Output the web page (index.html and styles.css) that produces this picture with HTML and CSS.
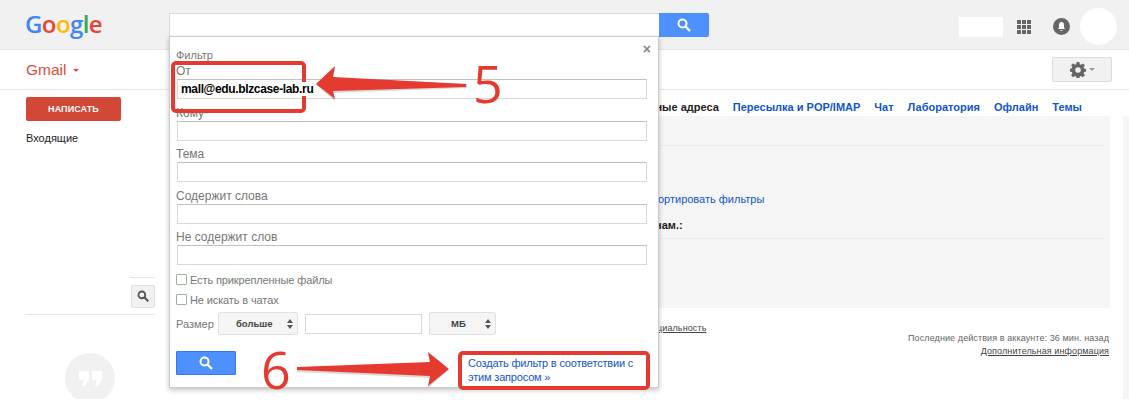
FILE: index.html
```html
<!DOCTYPE html>
<html lang="ru">
<head>
    <meta charset="UTF-8">
    <title>Gmail - Фильтры</title>
    <link rel="stylesheet" href="styles.css">
</head>
<body>
    <!-- верхняя полоса -->
    <header class="topbar">
        <div class="logo"><span class="c-blue">G</span><span class="c-red">o</span><span class="c-yellow">o</span><span class="c-blue">g</span><span class="c-green">l</span><span class="c-red">e</span></div>
        <div class="searchbox"></div>
        <button class="search-btn">
            <svg width="16" height="16" viewBox="0 0 16 16"><circle cx="6.5" cy="6.5" r="4" fill="none" stroke="#fff" stroke-width="2"/><path d="M9.6 9.6 14 14" stroke="#fff" stroke-width="2.4"/></svg>
        </button>
        <div class="account">
            <div class="account-name"></div>
            <svg class="apps" width="14" height="14" viewBox="0 0 14 14" fill="#666"><rect width="4" height="4"/><rect x="5" width="4" height="4"/><rect x="10" width="4" height="4"/><rect y="5" width="4" height="4"/><rect x="5" y="5" width="4" height="4"/><rect x="10" y="5" width="4" height="4"/><rect y="10" width="4" height="4"/><rect x="5" y="10" width="4" height="4"/><rect x="10" y="10" width="4" height="4"/></svg>
            <svg class="bell" width="17" height="17" viewBox="0 0 17 17"><circle cx="8.5" cy="8.5" r="8.5" fill="#666"/><path d="M8.5 4C6.7 4 6 5.400 6 7v2.500L5 11h7l-1-1.500V7c0-1.600-.7-3-2.500-3zM7.400 12a1.100 1.100 0 0 0 2.200 0z" fill="#fff"/></svg>
            <div class="avatar"></div>
        </div>
    </header>

    <!-- вторая полоса -->
    <div class="subbar">
        <div class="gmail">Gmail <span class="caret"></span></div>
        <button class="gear-btn">
            <svg width="16" height="16" viewBox="0 0 16 16"><path fill="#666" fill-rule="evenodd" d="M6.600 0h2.800l.4 2.200 1.200.5L12.900 1.400l2 2-1.300 1.900.5 1.200 2 .4v2.800l-2 .4-.5 1.200 1.300 1.900-2 2-1.900-1.300-1.200.5-.4 2H6.600l-.4-2-1.200-.5-1.900 1.300-2-2 1.300-1.900-.5-1.200-2-.4V6.700l2-.4.5-1.200-1.300-1.900 2-2L5 2.700l1.200-.5zM8 5.200a2.800 2.800 0 1 0 0 5.600 2.800 2.800 0 0 0 0-5.600z"/></svg>
            <span class="caret caret-grey"></span>
        </button>
    </div>

    <div class="layout">
        <!-- левая колонка -->
        <aside class="sidebar">
            <button class="compose">НАПИСАТЬ</button>
            <div class="inbox">Входящие</div>
            <div class="side-line"></div>
            <div class="side-search">
                <button class="small-search">
                    <svg width="12" height="12" viewBox="0 0 16 16"><circle cx="6.500" cy="6.500" r="4.500" fill="none" stroke="#555" stroke-width="2.400"/><path d="M10 10l5 5" stroke="#555" stroke-width="2.800"/></svg>
                </button>
            </div>
            <div class="hangouts">
                <div class="hangouts-circle">
                    <svg width="23" height="15" viewBox="0 0 23 15" fill="#fff"><path d="M0 0h10v8l-4 7H3l2-6H0zM13 0h10v8l-4 7h-3l2-6h-5z"/></svg>
                </div>
            </div>
        </aside>

        <!-- настройки -->
        <main class="content">
            <nav class="tabs">
                <span class="tab-current">ные адреса</span>
                <a>Пересылка и POP/IMAP</a>
                <a>Чат</a>
                <a>Лаборатория</a>
                <a>Офлайн</a>
                <a>Темы</a>
            </nav>
            <div class="panel">
                <div class="panel-row row-first"></div>
                <div class="panel-row row-second">
                    <a class="export-link">портировать фильтры</a>
                    <b class="blocked">нам.:</b>
                </div>
            </div>
            <footer class="foot">
                <a class="privacy">циальность</a>
                <div class="activity">
                    <div>Последние действия в аккаунте: 36 мин. назад</div>
                    <a>Дополнительная информация</a>
                </div>
            </footer>
        </main>
        <div class="scrolltrack"></div>
    </div>

    <!-- панель поиска -->
    <form class="filter-popup">
        <span class="close">&times;</span>
        <div class="popup-title">Фильтр</div>
        <div class="fld"><label>От</label><div class="field field-from"><span class="email">mall@edu.blzcase-lab.ru</span></div></div>
        <div class="fld"><label>Кому</label><div class="field"></div></div>
        <div class="fld"><label>Тема</label><div class="field"></div></div>
        <div class="fld"><label>Содержит слова</label><div class="field"></div></div>
        <div class="fld"><label>Не содержит слов</label><div class="field"></div></div>
        <div class="check"><span class="box"></span>Есть прикрепленные файлы</div>
        <div class="check"><span class="box"></span>Не искать в чатах</div>
        <div class="size-row">
            <span class="size-label">Размер</span>
            <div class="select select-more">больше<span class="updown"></span></div>
            <div class="field size-input"></div>
            <div class="select select-unit">МБ<span class="updown"></span></div>
        </div>
        <div class="popup-bottom">
            <button type="button" class="popup-search">
                <svg width="16" height="16" viewBox="0 0 16 16"><circle cx="6.500" cy="6.500" r="4" fill="none" stroke="#fff" stroke-width="2"/><path d="M9.600 9.600 14 14" stroke="#fff" stroke-width="2.400"/></svg>
            </button>
            <a class="create-link">Создать фильтр в соответствии с этим запросом »</a>
        </div>
    </form>

    <!-- пометки поверх скриншота -->
    <div class="mark-box mark-from"></div>
    <div class="mark-box mark-create"></div>
    <svg class="arrows" width="1129" height="420" viewBox="0 0 1129 420">
        <path class="arrow-shadow" d="M335 68 316 85 335 101 333 93 467 88 467 84 333 78z"/>
        <path class="arrow" d="M335 66 316 84 335 99 333 91 466 87 466 84 333 77z"/>
        <path class="arrow-shadow" d="M428 354 449 370 428 388 430 378 297 372 297 369 430 364z"/>
        <path class="arrow" d="M428 352 449 369 428 386 430 376 297 370 297 367 430 362z"/>
    </svg>
    <div class="mark-num num-5">5</div>
    <div class="mark-num num-6">6</div>
</body>
</html>
```
FILE: styles.css
```css
body {
    margin: 0;
    height: 420px;
    overflow: hidden;
    position: relative;
    background: #fff;
    font-family: "Liberation Sans", Arial, sans-serif;
    font-size: 11px;
    color: #222;
}

button {
    padding: 0;
    font-family: inherit;
}

a {
    color: #15c;
}

/* верхняя полоса */
.topbar {
    display: flex;
    align-items: flex-start;
    height: 49px;
    background: #f1f1f1;
    border-bottom: 1px solid #e5e5e5;
}

.logo {
    width: 144px;
    margin-left: 25px;
    margin-top: 6px;
    font-family: "Open Sans", sans-serif;
    font-weight: 600;
    font-size: 24px;
    line-height: 36px;
    letter-spacing: -.6px;
}

.c-blue { color: #4285f4; }
.c-red { color: #ea4335; }
.c-yellow { color: #fbbc05; }
.c-green { color: #34a853; }

.searchbox {
    width: 489px;
    height: 23px;
    margin-top: 13px;
    background: #fff;
    border: 1px solid #d9d9d9;
    border-right: 0;
    border-bottom: 0;
}

.search-btn {
    width: 50px;
    height: 24px;
    margin-top: 13px;
    background: #4d90fe;
    border: 0;
    border-radius: 0 2px 2px 0;
    display: flex;
    align-items: center;
    justify-content: center;
}

.account {
    display: flex;
    align-items: center;
    margin-left: 250px;
    height: 37px;
    margin-top: 8px;
}

.account-name {
    width: 44px;
    height: 20px;
    background: #fff;
}

.apps {
    margin-left: 14px;
}

.bell {
    margin-left: 22px;
}

.avatar {
    width: 37px;
    height: 37px;
    margin-left: 10px;
    border-radius: 50%;
    background: #fff;
}

/* вторая полоса */
.subbar {
    display: flex;
    align-items: center;
    justify-content: space-between;
    height: 39px;
    border-bottom: 1px solid #e5e5e5;
    padding: 0 17px 0 26px;
}

.gmail {
    font-size: 15.500px;
    color: #dd4b39;
}

.caret {
    display: inline-block;
    margin-left: 2px;
    vertical-align: middle;
    border: 3px solid transparent;
    border-top: 3px solid #dd4b39;
    border-bottom: 0;
}

.caret-grey {
    border-top-color: #999;
    margin-left: 3px;
}

.gear-btn {
    width: 60px;
    height: 25px;
    background: #f1f1f1;
    border: 1px solid #dcdcdc;
    border-radius: 2px;
    display: flex;
    align-items: center;
    justify-content: center;
}

/* колонки */
.layout {
    display: flex;
    height: 330px;
}

.sidebar {
    width: 155px;
    flex: none;
    padding-left: 26px;
    box-sizing: border-box;
}

.compose {
    display: block;
    width: 95px;
    height: 24px;
    margin-top: 7px;
    background: #d14836;
    border: 0;
    border-radius: 2px;
    color: #fff;
    font-size: 9px;
    font-weight: bold;
    letter-spacing: .1px;
}

.inbox {
    margin-top: 10px;
    line-height: 14px;
    color: #222;
}

.side-line {
    width: 25px;
    height: 1px;
    margin: 132px 0 0 auto;
    background: #e5e5e5;
}

.side-search {
    margin-left: -1px;
    height: 36px;
    border-bottom: 1px solid #e5e5e5;
    display: flex;
    justify-content: flex-end;
    align-items: center;
}

.small-search {
    width: 24px;
    height: 23px;
    background: #f1f1f1;
    border: 1px solid #e0e0e0;
    border-radius: 2px;
    display: flex;
    align-items: center;
    justify-content: center;
}

.hangouts {
    width: 50px;
    height: 46px;
    margin: 38px 0 0 39px;
    overflow: hidden;
}

.hangouts-circle {
    width: 50px;
    height: 50px;
    border-radius: 50%;
    background: #f1f1f1;
    display: flex;
    align-items: center;
    justify-content: center;
}

.content {
    flex: none;
    width: 955px;
}

.tabs {
    display: flex;
    justify-content: flex-end;
    gap: 14px;
    height: 26px;
    align-items: center;
    padding: 8px 28px 0 0;
    font-weight: bold;
    white-space: nowrap;
    font-size: 11px;
    box-sizing: border-box;
}

.tab-current {
    color: #222;
}

.panel {
    height: 192px;
    margin-left: 100px;
    background: #f5f5f5;
    padding-right: 5px;
}

.panel-row {
    border-bottom: 1px solid #ececec;
}

.row-first {
    height: 29px;
}

.row-second {
    height: 92px;
    position: relative;
}

.export-link {
    position: absolute;
    left: 397px;
    top: 47px;
}

.blocked {
    position: absolute;
    left: 400px;
    top: 73px;
}

.foot {
    position: relative;
    font-size: 9px;
    letter-spacing: .1px;
    color: #666;
}

.privacy {
    position: absolute;
    left: 502px;
    top: 15px;
    color: #444;
    text-decoration: underline;
}

.activity {
    position: absolute;
    right: 1px;
    top: 24px;
    text-align: right;
    line-height: 13px;
}

.activity a {
    color: #444;
    text-decoration: underline;
}

.scrolltrack {
    width: 6px;
    margin: 26px 0 0 13px;
    height: 283px;
    background: #f5f5f5;
}

/* панель поиска */
.filter-popup {
    position: absolute;
    left: 169px;
    top: 36px;
    width: 490px;
    height: 352px;
    box-sizing: border-box;
    padding: 11px 11px 0 6px;
    background: #fff;
    border: 1px solid #ccc;
    box-shadow: 0 2px 5px rgba(0,0,0,.25);
    color: #777;
    font-size: 11px;
}

.close {
    position: absolute;
    right: 7px;
    top: 4px;
    font-size: 14px;
    font-weight: bold;
    color: #888;
}

.popup-title {
    line-height: 14px;
}

.fld {
    height: 41.500px;
    font-size: 12px;
}

.fld label {
    display: block;
    height: 17px;
    line-height: 19px;
}

.field {
    height: 20px;
    margin-left: 1px;
    box-sizing: border-box;
    background: #fff;
    border: 1px solid #d9d9d9;
    border-top-color: #c0c0c0;
}

.field-from {
    padding-left: 3px;
    line-height: 18px;
}

/* адрес лежит поверх красной рамки */
.email {
    position: relative;
    z-index: 1;
    color: #000;
    background: #fff;
    font-weight: bold;
    font-size: 12px;
    letter-spacing: -.35px;
}

.check {
    display: flex;
    align-items: center;
    height: 20px;
    letter-spacing: -.12px;
}

.box {
    width: 11px;
    height: 11px;
    box-sizing: border-box;
    margin-right: 3px;
    border: 1px solid #aaa;
    border-radius: 1px;
}

.size-row {
    display: flex;
    align-items: center;
    height: 24px;
    margin-top: 2px;
}

.size-label {
    width: 42px;
}

.select {
    position: relative;
    height: 23px;
    box-sizing: border-box;
    background: #f5f5f5;
    border: 1px solid #e0e0e0;
    border-radius: 2px;
    line-height: 21px;
    font-weight: bold;
    color: #444;
    font-size: 9.500px;
}

.select-more {
    width: 80px;
    padding-left: 17px;
}

.select-unit {
    width: 67px;
    padding-left: 21px;
}

.updown {
    position: absolute;
    right: 4px;
    top: 6px;
    width: 6px;
    height: 10px;
}

.updown::before,
.updown::after {
    content: "";
    position: absolute;
    left: 0;
    border: 3px solid transparent;
}

.updown::before {
    top: 0;
    border-top: 0;
    border-bottom: 4px solid #555;
}

.updown::after {
    bottom: 0;
    border-bottom: 0;
    border-top: 4px solid #555;
}

.size-input {
    width: 117px;
    margin: 0 7px;
    border-top-color: #d9d9d9;
}

.popup-bottom {
    display: flex;
    margin-top: 15.500px;
}

.popup-search {
    width: 60px;
    height: 24px;
    background: #4d90fe;
    border: 1px solid #3079ed;
    border-radius: 1px;
    display: flex;
    align-items: center;
    justify-content: center;
}

.create-link {
    width: 172px;
    margin-left: 232px;
    margin-top: 5px;
    line-height: 14px;
    letter-spacing: -.18px;
}

/* пометки */
.mark-box {
    position: absolute;
    box-sizing: border-box;
    border: 4px solid #e53a2f;
    border-radius: 5px;
}

.mark-from {
    left: 171px;
    top: 61px;
    width: 135px;
    height: 52px;
}

.mark-create {
    left: 458px;
    top: 351px;
    width: 192px;
    height: 39px;
}

.arrows {
    position: absolute;
    left: 0;
    top: 0;
}

.arrow {
    fill: #e53a2f;
}

.arrow-shadow {
    fill: rgba(0,0,0,.15);
}

.mark-num {
    position: absolute;
    color: #e53a2f;
    font-family: "Open Sans", sans-serif;
    font-size: 52px;
    line-height: 52px;
}

.num-5 {
    left: 473px;
    top: 57px;
}

.num-6 {
    left: 261px;
    top: 343px;
}
```
